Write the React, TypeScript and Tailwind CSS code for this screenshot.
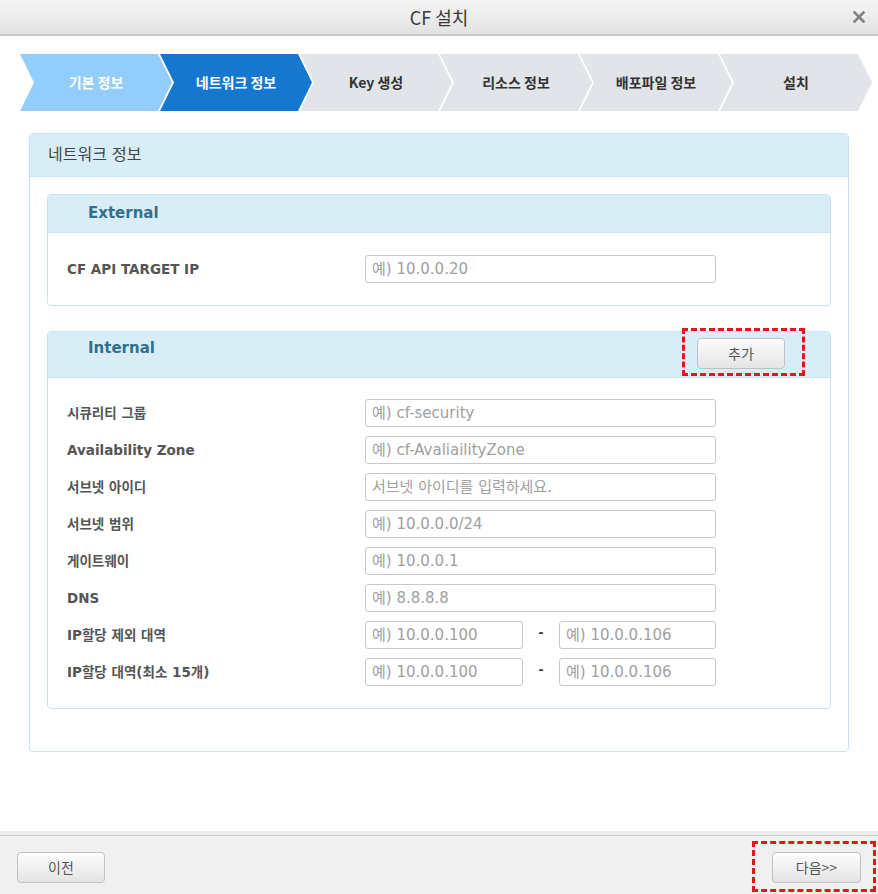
import React from 'react'

const steps = [
  { label: '기본 정보', tone: 'done' },
  { label: '네트워크 정보', tone: 'active' },
  { label: 'Key 생성', tone: 'todo' },
  { label: '리소스 정보', tone: 'todo' },
  { label: '배포파일 정보', tone: 'todo' },
  { label: '설치', tone: 'todo' },
]

const toneClass: Record<string, string> = {
  done: 'bg-[#93cdfb] text-white',
  active: 'bg-[#1677cf] text-white',
  todo: 'bg-[#e1e4e8] text-[#333]',
}

const field = "font-['DejaVu_Sans','Noto_Sans_CJK_KR',sans-serif]"
const kr = "font-['Noto_Sans_CJK_KR','DejaVu_Sans',sans-serif]"

function Input({ placeholder, className = 'w-[351px]' }: { placeholder: string; className?: string }) {
  return (
    <input
      placeholder={placeholder}
      className={`h-[28px] ${className} rounded-[3px] border border-[#c8c8c8] bg-white pl-[6px] text-[15px] ${field} text-[#555] placeholder:text-[#a0a0a0] outline-none`}
    />
  )
}

function Row({ label, children }: { label: string; children: React.ReactNode }) {
  return (
    <div className="flex items-center">
      <div className={`w-[298px] text-[13.5px] font-bold text-[#555] ${field}`}>{label}</div>
      {children}
    </div>
  )
}

function RangeRow({ label }: { label: string }) {
  return (
    <Row label={label}>
      <Input placeholder="예) 10.0.0.100" className="w-[158px]" />
      <span className="w-[36px] -translate-y-[4px] text-center text-[14px] font-bold text-[#333]">-</span>
      <Input placeholder="예) 10.0.0.106" className="w-[157px]" />
    </Row>
  )
}

function GradientButton({ children, className = '' }: { children: React.ReactNode; className?: string }) {
  return (
    <button
      className={`h-[31px] w-[88px] rounded-[4px] border border-[#c2c2c2] bg-gradient-to-b from-[#fdfdfd] to-[#e4e4e4] text-[14px] text-[#555] shadow-[inset_0_1px_0_#fff] ${kr} ${className}`}
    >
      {children}
    </button>
  )
}

export default function App() {
  return (
    <div className="flex h-[894px] w-[878px] flex-col bg-white">
      {/* Title bar */}
      <div className="relative flex h-[36px] shrink-0 items-center justify-center border-b-2 border-[#c9c9c9] bg-gradient-to-b from-[#f5f5f5] to-[#e3e3e3]">
        <span className={`text-[18px] text-[#3a3a3a] ${kr}`}>CF 설치</span>
        <svg className="absolute right-[13px] top-[11px]" width="12" height="12" viewBox="0 0 12 12">
          <path d="M1.5 1.5 L10.5 10.5 M10.5 1.5 L1.5 10.5" stroke="#7c8387" strokeWidth="2.6" strokeLinecap="square" />
        </svg>
      </div>

      {/* Stepper */}
      <div className="mt-[18px] flex pl-[20px]">
        {steps.map((s, i) => (
          <div
            key={s.label}
            className={`flex h-[57px] w-[152px] shrink-0 items-center justify-center pl-[14px] pr-[14px] text-[14px] font-bold ${kr} ${toneClass[s.tone]} [clip-path:polygon(0_0,138px_0,152px_50%,138px_100%,0_100%,14px_50%)] ${i > 0 ? '-ml-[12px]' : ''}`}
          >
            {s.label}
          </div>
        ))}
      </div>

      {/* Main panel */}
      <div className="mx-[29px] mt-[22px] rounded-[4px] border border-[#c4e6f2]">
        <div className={`flex h-[43px] items-center rounded-t-[3px] border-b border-[#c4e6f2] bg-[#d9edf7] px-[18px] text-[16px] text-[#3c4650] ${field}`}>
          네트워크 정보
        </div>
        <div className="flex flex-col gap-[25px] px-[17px] pb-[42px] pt-[17px]">
          {/* External */}
          <div className="rounded-[4px] border border-[#c4e6f2]">
            <div className={`flex h-[38px] items-center rounded-t-[3px] border-b border-[#c4e6f2] bg-[#d9edf7] pl-[40px] text-[15px] font-bold text-[#31708f] ${field}`}>
              External
            </div>
            <div className="pb-[22px] pl-[19px] pt-[22px]">
              <Row label="CF API TARGET IP">
                <Input placeholder="예) 10.0.0.20" />
              </Row>
            </div>
          </div>

          {/* Internal */}
          <div className="rounded-[4px] border border-[#c4e6f2]">
            <div className="flex items-start justify-between rounded-t-[3px] border-b border-[#c4e6f2] bg-[#d9edf7] pb-[8px] pl-[40px] pr-[45px] pt-[6px]">
              <span className={`leading-[20px] text-[15px] font-bold text-[#31708f] ${field}`}>Internal</span>
              <div className="relative">
                <GradientButton className="text-[#444]">추가</GradientButton>
                <div className="pointer-events-none absolute -bottom-[7px] -left-[15px] -right-[20px] -top-[10px] border-[3px] border-dashed border-[#e8141c]" />
              </div>
            </div>
            <div className="flex flex-col gap-[9px] pb-[22px] pl-[19px] pt-[21px]">
              <Row label="시큐리티 그룹">
                <Input placeholder="예) cf-security" />
              </Row>
              <Row label="Availability Zone">
                <Input placeholder="예) cf-AvaliailityZone" />
              </Row>
              <Row label="서브넷 아이디">
                <Input placeholder="서브넷 아이디를 입력하세요." />
              </Row>
              <Row label="서브넷 범위">
                <Input placeholder="예) 10.0.0.0/24" />
              </Row>
              <Row label="게이트웨이">
                <Input placeholder="예) 10.0.0.1" />
              </Row>
              <Row label="DNS">
                <Input placeholder="예) 8.8.8.8" />
              </Row>
              <RangeRow label="IP할당 제외 대역" />
              <RangeRow label="IP할당 대역(최소 15개)" />
            </div>
          </div>
        </div>
      </div>

      <div className="flex-1" />

      {/* Footer */}
      <div className="h-[4px] shrink-0 bg-[#ececec]" />
      <div className="flex h-[59px] shrink-0 items-start justify-between border-t border-[#d2d2d2] bg-[#f0f0f0] px-[17px] pt-[16px]">
        <GradientButton>이전</GradientButton>
        <div className="relative">
          <GradientButton className="w-[89px]">다음&gt;&gt;</GradientButton>
          <div className="pointer-events-none absolute -bottom-[9px] -left-[20px] -right-[15px] -top-[11px] border-[3px] border-dashed border-[#e8141c]" />
        </div>
      </div>
    </div>
  )
}
